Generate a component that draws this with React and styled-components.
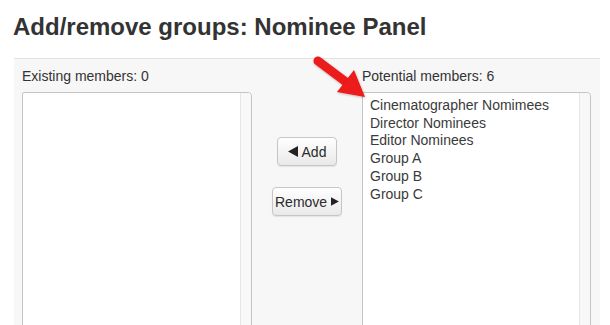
import React from 'react';
import styled, { createGlobalStyle } from 'styled-components';

const GlobalStyle = createGlobalStyle`
  html, body {
    margin: 0;
    padding: 0;
    background: #ffffff;
    overflow: hidden;
  }
  body {
    font-family: "Liberation Sans", Arial, sans-serif;
    color: #333333;
  }
`;

const Page = styled.div`
  position: relative;
  width: 610px;
  height: 325px;
  overflow: hidden;
`;

const Title = styled.h1`
  margin: 0;
  padding: 13px 0 0 13px;
  height: 58px;
  box-sizing: border-box;
  font-size: 24px;
  line-height: 28px;
  font-weight: bold;
  color: #333333;
`;

const Panel = styled.div`
  margin: 0 0 0 14px;
  width: 586px;
  height: 270px;
  background: #f7f7f7;
  border-top: 1px solid #e3e3e3;
  box-sizing: border-box;
  padding-left: 8px;
  display: grid;
  grid-template-columns: 230px 110px 229px;
  grid-template-rows: 33px 1fr;
`;

const Label = styled.div`
  align-self: center;
  font-size: 14px;
  color: #333333;
`;

const SelectBox = styled.div`
  height: 250px;
  background: #ffffff;
  border: 1px solid #c4c4c4;
  border-radius: 2px 4px 0 0;
  display: flex;
  box-sizing: border-box;
`;

const Options = styled.div`
  flex: 1;
  padding: 4px 0 0 7px;
  font-size: 14px;
  line-height: 17.7px;
  color: #3a3a3a;
`;

const Track = styled.div`
  width: 10px;
  background: #f8f8f8;
  border-left: 1px solid #e6e6e6;
  border-radius: 0 4px 0 0;
`;

const Middle = styled.div`
  display: flex;
  flex-direction: column;
  align-items: center;
  padding-top: 45px;
  gap: 21px;
`;

const Button = styled.button`
  height: 29px;
  width: ${p => p.$w}px;
  padding: 0 2px;
  display: flex;
  align-items: center;
  justify-content: center;
  gap: 4px;
  font-family: "Liberation Sans", Arial, sans-serif;
  font-size: 14px;
  color: #2a2a2a;
  background: linear-gradient(#ffffff, #e9e9e9);
  border: 1px solid #c6c6c6;
  border-radius: 4px;
  box-shadow: 0 1px 1px rgba(0, 0, 0, 0.08);
`;

const Arrow = styled.svg`
  position: absolute;
  left: 0;
  top: 0;
  pointer-events: none;
`;

const Tri = ({ dir }) => (
  <svg width="10" height="11" viewBox="0 0 10 11">
    {dir === 'left'
      ? <polygon points="10,0 10,11 0,5.5" fill="#222" />
      : <polygon points="0,0 0,11 10,5.5" fill="#222" />}
  </svg>
);

const groups = [
  'Cinematographer Nomimees',
  'Director Nominees',
  'Editor Nominees',
  'Group A',
  'Group B',
  'Group C',
];

export default function App() {
  return (
    <Page>
      <GlobalStyle />
      <Title>Add/remove groups: Nominee Panel</Title>
      <Panel>
        <Label>Existing members: 0</Label>
        <div />
        <Label>Potential members: 6</Label>

        <SelectBox>
          <Options />
          <Track />
        </SelectBox>

        <Middle>
          <Button $w={60}><Tri dir="left" />Add</Button>
          <Button $w={70}>Remove<Tri dir="right" /></Button>
        </Middle>

        <SelectBox>
          <Options>
            {groups.map(g => <div key={g}>{g}</div>)}
          </Options>
          <Track />
        </SelectBox>
      </Panel>

      <Arrow width="610" height="325" viewBox="0 0 610 325">
        <defs>
          <filter id="sh" x="-20%" y="-20%" width="140%" height="140%">
            <feDropShadow dx="0.5" dy="1" stdDeviation="0.8" floodColor="#000" floodOpacity="0.25" />
          </filter>
        </defs>
        <g filter="url(#sh)">
          <line x1="318" y1="61" x2="346" y2="82" stroke="#ec1a1a" strokeWidth="9" strokeLinecap="round" />
          <polygon points="365,97 337,92 354,70" fill="#ec1a1a" />
        </g>
      </Arrow>
    </Page>
  );
}
